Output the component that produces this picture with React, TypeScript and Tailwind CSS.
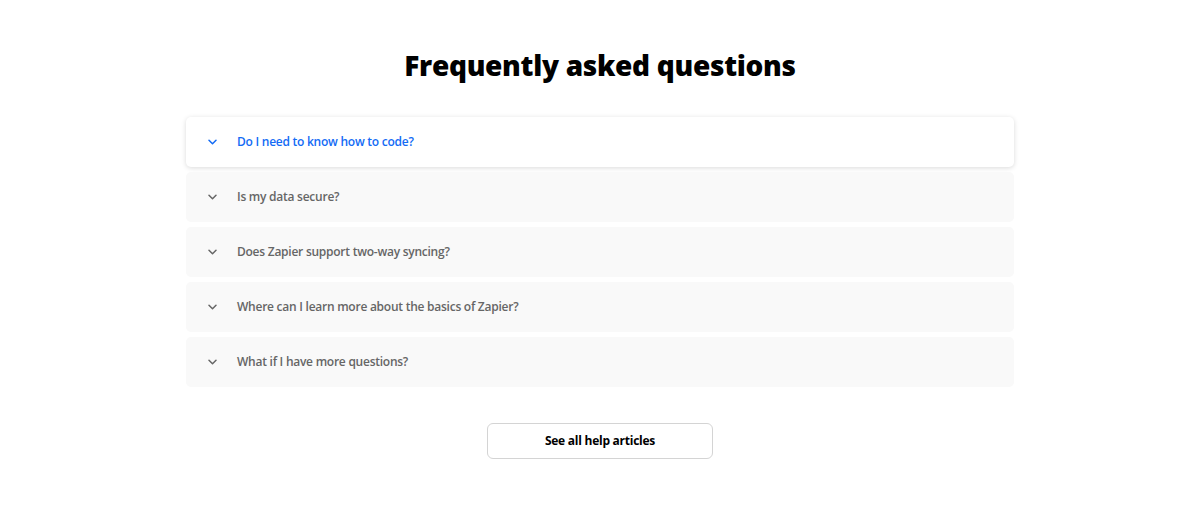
import React, { useState } from 'react';

const questions = [
  'Do I need to know how to code?',
  'Is my data secure?',
  'Does Zapier support two-way syncing?',
  'Where can I learn more about the basics of Zapier?',
  'What if I have more questions?',
];

const Chevron: React.FC<{ className?: string }> = ({ className }) => (
  <svg width="9" height="6" viewBox="0 0 9 6" fill="none" className={className}>
    <path d="M1 1.2l3.5 3.5 3.5-3.5" stroke="currentColor" strokeWidth="1.5" strokeLinecap="round" strokeLinejoin="round" />
  </svg>
);

const App: React.FC = () => {
  const [active, setActive] = useState(0);

  return (
    <div className="min-h-[520px] bg-white font-['Open_Sans',sans-serif] pt-[45px]">
      <h1 className="text-center text-[28px] leading-[40px] font-extrabold text-black tracking-[-0.3px]">
        Frequently asked questions
      </h1>

      <div className="mx-auto w-[828px] mt-[32px] flex flex-col gap-[5px]">
        {questions.map((q, i) => {
          const isActive = i === active;
          return (
            <button
              key={q}
              onClick={() => setActive(i)}
              className={`h-[50px] w-full flex items-center pl-[22px] pr-[22px] text-left rounded-[5px] ${
                isActive
                  ? 'bg-white shadow-[0_1px_5px_rgba(0,0,0,0.15)]'
                  : 'bg-[#f9f9f9]'
              }`}
            >
              <Chevron className={isActive ? 'text-[#136bf5]' : 'text-[#666666]'} />
              <span
                className={`ml-[20px] text-[12px] tracking-[-0.25px] font-semibold ${
                  isActive ? 'text-[#136bf5]' : 'text-[#666666]'
                }`}
              >
                {q}
              </span>
            </button>
          );
        })}
      </div>

      <div className="flex justify-center mt-[36px]">
        <button className="w-[226px] h-[36px] rounded-[6px] border border-[#d4d4d4] bg-white text-[12px] tracking-[-0.25px] font-bold text-black">
          See all help articles
        </button>
      </div>
    </div>
  );
};

export default App;
